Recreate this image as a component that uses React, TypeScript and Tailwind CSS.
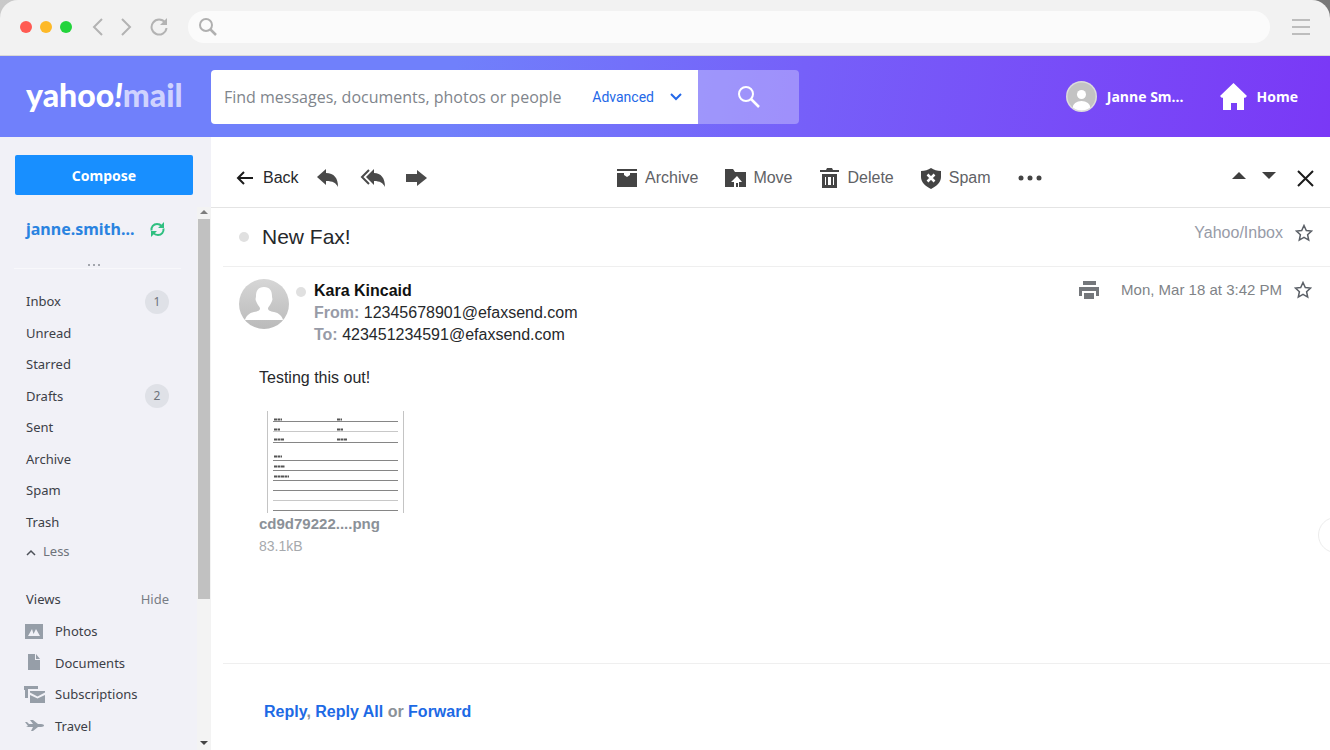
import { useState } from "react";
import type { ReactNode } from "react";
import clsx from "clsx";

const folders = [
  { name: "Inbox", count: 1 },
  { name: "Unread" },
  { name: "Starred" },
  { name: "Drafts", count: 2 },
  { name: "Sent" },
  { name: "Archive" },
  { name: "Spam" },
  { name: "Trash" },
];

const views = [
  {
    name: "Photos",
    icon: (
      <path
        fillRule="evenodd"
        d="M1 3h18v15H1zM4 15h12l-4-7-2.500 5L8 8z"
      />
    ),
  },
  { name: "Documents", icon: <path d="M4 2h7v6h5v10H4zM12 2l4 5h-4z" /> },
  {
    name: "Subscriptions",
    icon: (
      <>
        <path d="M0 2h14v3H4v9H1V6H0z" />
        <path d="M6 7h15v1.500l-7.500 4L6 8.500z" />
        <path d="M6 11l7.500 3.500L21 11v8H6z" />
      </>
    ),
  },
  {
    name: "Travel",
    icon: (
      <path d="M1 7h2l2 2h4L6 5h3l5 4h3c2 0 3 .8 3 1.500S19 12 17 12h-3l-5 4H7l2-4H4l-2-1h2z" />
    ),
  },
];

const actions = [
  {
    name: "Archive",
    icon: <path d="M0 1h20v2H0zM0 5h7v2l3 2 3-2V5h7v14H0z" />,
  },
  {
    name: "Move",
    icon: (
      <path
        fillRule="evenodd"
        d="M0 1h8l2 3h11v15h-7v-5h3l-5-6-6 6h3v5H0zM11 15h2v4h-2z"
      />
    ),
  },
  {
    name: "Delete",
    icon: (
      <path
        fillRule="evenodd"
        d="M0 2h6l1-2h5l1 2h6v2H0zM2 6h15v14H2zM5 9v8h9V9zM6 9h2v8H6zM11 9h2v8h-2z"
      />
    ),
  },
  {
    name: "Spam",
    icon: (
      <>
        <path d="M10 0c3 2 6 3 10 3v6c0 5-4 9-10 12C4 18 0 14 0 9V3c4 0 7-1 10-3z" />
        <path d="M6.500 6.500l7 7M13.500 6.500l-7 7" stroke="#fff" strokeWidth="2.5" />
      </>
    ),
  },
];

const fieldLines = [11, 21, 32, 50, 60, 70, 80, 90, 100];

const fieldLabels = [
  { x: 7, y: 9, w: 8 },
  { x: 70, y: 9, w: 5 },
  { x: 7, y: 19, w: 6 },
  { x: 70, y: 19, w: 6 },
  { x: 7, y: 29, w: 10 },
  { x: 70, y: 29, w: 10 },
  { x: 7, y: 46, w: 8 },
  { x: 7, y: 56, w: 11 },
  { x: 7, y: 66, w: 15 },
];

function IconButton({ label, children }: { label: string; children: ReactNode }) {
  return (
    <button aria-label={label} className="flex items-center justify-center">
      {children}
    </button>
  );
}

function Star() {
  return (
    <svg width="18" height="18" viewBox="0 0 18 18" fill="none" stroke="#5b6067" strokeWidth="1.5">
      <path d="M9 1.500l2.300 5 5.200.6-3.900 3.600 1.100 5.400L9 13.400l-4.700 2.700 1.100-5.400L1.500 7.100l5.200-.6z" />
    </svg>
  );
}

function BrowserBar() {
  return (
    <div className="bg-linear-to-r from-[#c9c9c9] to-[#777777]">
      <div className="flex h-14 items-center rounded-t-[18px] border-b border-[#d9d9d6] bg-[#f2f2f2] px-5 pb-[2px]">
        <div className="flex gap-2">
          <span className="size-3 rounded-full bg-[#ff5a52]" />
          <span className="size-3 rounded-full bg-[#fdb927]" />
          <span className="size-3 rounded-full bg-[#22d43b]" />
        </div>
        <div className="ml-5 flex gap-[18px] text-[#b3b3b3]">
          <IconButton label="Previous page">
            <svg width="11" height="18" fill="none" stroke="currentColor" strokeWidth="2">
              <path d="M10 1L2 9l8 8" />
            </svg>
          </IconButton>
          <IconButton label="Next page">
            <svg width="11" height="18" fill="none" stroke="currentColor" strokeWidth="2">
              <path d="M1 1l8 8-8 8" />
            </svg>
          </IconButton>
          <IconButton label="Reload">
            <svg width="18" height="18" fill="none" stroke="currentColor" strokeWidth="2">
              <path d="M15 4.500A7.500 7.500 0 1 0 16.500 10" />
              <path d="M17 0v7h-7z" fill="currentColor" stroke="none" />
            </svg>
          </IconButton>
        </div>
        <label className="mr-[22px] ml-5 flex h-8 grow items-center gap-3 rounded-2xl bg-[#fbfbfb] px-[10px]">
          <svg width="19" height="19" fill="none" stroke="#b0b0b0" strokeWidth="2">
            <circle cx="8" cy="8" r="6" />
            <path d="M12 12l6 6" strokeWidth="2.5" />
          </svg>
          <input aria-label="Address" className="h-full min-w-0 grow bg-transparent text-sm outline-none" />
        </label>
        <IconButton label="Browser menu">
          <svg width="18" height="18" stroke="#bdbdbd" strokeWidth="2">
            <path d="M0 2h18M0 9h18M0 16h18" />
          </svg>
        </IconButton>
      </div>
    </div>
  );
}

function Header() {
  return (
    <header className="flex h-[81px] shrink-0 items-center bg-[linear-gradient(100deg,#7080fb_0%,#7080fb_34%,#7660f9_60%,#7a38f6_100%)] pr-8 text-white">
      <a
        href="#"
        className="flex w-[211px] shrink-0 items-center pb-1 pl-[26px] font-['Lato',sans-serif] text-[32px] leading-8 font-black"
      >
        yahoo<span className="italic">!</span>
        <span className="text-[#cfd3fe]">mail</span>
      </a>
      <form className="flex h-[54px] w-[588px]" onSubmit={(e) => e.preventDefault()}>
        <div className="flex min-w-0 grow items-center rounded-l-sm bg-white pr-4 pl-[13px]">
          <input
            aria-label="Search mail"
            placeholder="Find messages, documents, photos or people"
            className="min-w-0 grow font-['Open_Sans',sans-serif] text-base text-[#222222] outline-none placeholder:text-[#7f858c]"
          />
          <button
            type="button"
            className="flex items-center gap-4 font-['Roboto',sans-serif] text-sm text-[#2468e8]"
          >
            Advanced
            <svg width="12" height="8" fill="none" stroke="currentColor" strokeWidth="2">
              <path d="M1 1l5 5 5-5" />
            </svg>
          </button>
        </div>
        <button
          aria-label="Search"
          className="flex w-[101px] items-center justify-center rounded-r-sm bg-white/30"
        >
          <svg width="22" height="22" fill="none" stroke="#fff" strokeWidth="2">
            <circle cx="8" cy="8" r="7" />
            <path d="M13 13l8 8" strokeWidth="2.5" />
          </svg>
        </button>
      </form>
      <div className="ml-auto flex items-center gap-9 font-['Open_Sans',sans-serif] text-sm font-bold">
        <a href="#" className="flex items-center gap-[10px]">
          <svg width="31" height="31" viewBox="0 0 31 31">
            <clipPath id="user-clip">
              <circle cx="15.500" cy="15.500" r="14" />
            </clipPath>
            <circle cx="15.500" cy="15.500" r="15.500" fill="#dcdcdc" />
            <g clipPath="url(#user-clip)">
              <path d="M0 0h31v31H0z" fill="#c3c3c3" />
              <circle cx="15.500" cy="13.500" r="4.500" fill="#fff" />
              <ellipse cx="15.500" cy="27" rx="9" ry="7" fill="#fff" />
            </g>
          </svg>
          Janne Sm...
        </a>
        <a href="#" className="flex items-center gap-[10px]">
          <svg width="27" height="28" fill="#fff">
            <path d="M13.500 0L27 13l-2 2-1-.5V27h-7v-7h-6v7H3V14.500L2 15l-2-2z" />
          </svg>
          Home
        </a>
      </div>
    </header>
  );
}

function Sidebar() {
  const [showViews, setShowViews] = useState(true);

  return (
    <aside className="flex w-[211px] shrink-0 flex-col bg-[#f1f1f7] pt-[18px] font-['Noto_Sans',sans-serif] text-[13px] text-[#3c4047]">
      <button className="mr-[18px] ml-[15px] h-10 shrink-0 rounded-xs bg-[#188fff] pt-px text-sm font-bold text-white">
        Compose
      </button>
      <div className="mt-3 flex min-h-0 grow">
        <nav className="min-w-0 grow overflow-hidden pl-[26px]">
          <div className="flex h-[44px] items-center justify-between pr-8">
            <a href="#" className="text-base font-bold text-[#2a83e0]">
              janne.smith...
            </a>
            <IconButton label="Refresh">
              <svg width="15" height="15" viewBox="0 0 15 15" fill="none" stroke="#2fbf80" strokeWidth="2">
                <path d="M1.500 8.500C1 5 3.500 2 7 2c2 0 3.500.7 4.500 2M13.500 6.500C14 10 11.500 13 8 13c-2 0-3.500-.7-4.500-2" />
                <path d="M14 0v6H8zM1 15V9h6z" fill="#2fbf80" stroke="none" />
              </svg>
            </IconButton>
          </div>
          <div className="mt-3 mr-4 -ml-3 flex h-[6px] items-center justify-center border-b border-[#f8f8fb] pr-2">
            <svg width="12" height="3" fill="#a3a6ad">
              <path d="M0 0h2v2H0zM5 0h2v2H5zM10 0h2v2h-2z" />
            </svg>
          </div>
          <ul className="mt-[17px] flex h-[252px] flex-col pr-7">
            {folders.map((folder) => (
              <li key={folder.name} className="flex flex-1 items-center justify-between">
                <a href="#">{folder.name}</a>
                {folder.count && (
                  <span className="flex size-6 items-center justify-center rounded-full bg-[#dfe1e7] text-xs text-[#6e737b]">
                    {folder.count}
                  </span>
                )}
              </li>
            ))}
          </ul>
          <button className="flex h-7 items-center gap-[7px] text-[#6e737b]">
            <svg width="10" height="7" fill="none" stroke="#4d5159" strokeWidth="1.5">
              <path d="M1 6l4-4 4 4" />
            </svg>
            Less
          </button>
          <div className="mt-[18px] flex h-8 items-center justify-between pr-7">
            <h2>Views</h2>
            <button className="text-[#787d85]" onClick={() => setShowViews(!showViews)}>
              Hide
            </button>
          </div>
          <ul className={clsx("-ml-[2px] h-[126px] flex-col", showViews ? "flex" : "hidden")}>
            {views.map((view) => (
              <li key={view.name} className="flex flex-1 items-center">
                <a href="#" className="flex items-center gap-[9px]">
                  <svg width="22" height="22" fill="#969ea8">
                    {view.icon}
                  </svg>
                  {view.name}
                </a>
              </li>
            ))}
          </ul>
        </nav>
        <div className="flex w-[14px] shrink-0 flex-col items-center bg-[#f3f3f3]">
          <svg width="8" height="12" className="shrink-0" fill="#7d7d7d">
            <path d="M0 7l4-4 4 4z" />
          </svg>
          <div className="h-[70%] w-3 bg-[#c1c1c1]" />
          <svg width="8" height="12" className="mt-auto shrink-0" fill="#444">
            <path d="M0 3h8L4 7z" />
          </svg>
        </div>
      </div>
    </aside>
  );
}

function Toolbar() {
  return (
    <div className="flex h-[71px] shrink-0 items-center justify-between border-b border-[#e4e4e4] pt-3 pr-4 pl-[25px] text-base text-[#5f6266]">
      <div className="flex items-center gap-[18px]">
        <button className="flex items-center gap-[10px] text-[#26282b]">
          <svg width="17" height="14" fill="none" stroke="#1b1b1b" strokeWidth="2">
            <path d="M17 7H2M8 1L2 7l6 6" />
          </svg>
          Back
        </button>
        <IconButton label="Reply">
          <svg width="21" height="18" fill="#4a4a4a">
            <path d="M9 0v4c8 0 12 5 12 14-2-4-5-6-12-6v4L0 8z" />
          </svg>
        </IconButton>
        <div className="ml-1 flex items-center gap-5">
          <IconButton label="Reply all">
            <svg width="26" height="18" fill="#4a4a4a">
              <path d="M14 0v4c7 0 11 5 11 14-2-4-5-6-11-6v4L6 8z" />
              <path d="M9 1L2 8l7 7" fill="none" stroke="#4a4a4a" strokeWidth="2" />
            </svg>
          </IconButton>
          <IconButton label="Forward">
            <svg width="21" height="18" fill="#4a4a4a">
              <path d="M0 5h11V1l10 8-10 8v-4H0z" />
            </svg>
          </IconButton>
        </div>
      </div>
      <div className="flex items-center gap-[27px]">
        {actions.map((action) => (
          <button key={action.name} className="flex items-center gap-[7px]">
            <svg width="21" height="21" fill="#444">
              {action.icon}
            </svg>
            {action.name}
          </button>
        ))}
        <IconButton label="More actions">
          <svg width="24" height="6" fill="#444">
            <circle cx="3" cy="3" r="2.500" />
            <circle cx="12" cy="3" r="2.500" />
            <circle cx="21" cy="3" r="2.500" />
          </svg>
        </IconButton>
      </div>
      <div className="flex items-center gap-4">
        <IconButton label="Previous message">
          <svg width="14" height="14" fill="#3f3f3f">
            <path d="M0 8l7-7 7 7z" />
          </svg>
        </IconButton>
        <IconButton label="Next message">
          <svg width="14" height="14" fill="#3f3f3f">
            <path d="M0 1h14L7 8z" />
          </svg>
        </IconButton>
        <div className="ml-[5px] flex">
          <IconButton label="Close">
            <svg width="17" height="17" stroke="#1b1b1b" strokeWidth="2">
              <path d="M1 1l15 15M16 1L1 16" />
            </svg>
          </IconButton>
        </div>
      </div>
    </div>
  );
}

function Message() {
  return (
    <article className="flex grow flex-col pl-3 text-base text-[#26282b]">
      <div className="flex h-[59px] items-center border-b border-[#efefef] pr-[17px] pl-4">
        <span className="size-[10px] rounded-full bg-[#e0e0e0]" />
        <h1 className="ml-[13px] text-[21px]">New Fax!</h1>
        <div className="ml-auto flex items-center gap-3 pb-2 text-[#979ba7]">
          Yahoo/Inbox
          <IconButton label="Star conversation">
            <Star />
          </IconButton>
        </div>
      </div>
      <div className="flex items-start pt-3 pr-[18px] pl-4">
        <svg width="50" height="50" viewBox="0 0 50 50">
          <defs>
            <linearGradient id="sender-bg" x2="0" y2="1">
              <stop stopColor="#d6d6d6" />
              <stop offset="1" stopColor="#bababa" />
            </linearGradient>
          </defs>
          <circle cx="25" cy="25" r="25" fill="url(#sender-bg)" />
          <path
            fill="#fff"
            d="M25 8c6 0 8 4 8 9 0 2 1 3 0 5-1 3-3 5-4 7 0 3 2 3 6 4 5 1 8 4 9 8H6c1-4 4-7 9-8 4-1 6-1 6-4-1-2-3-4-4-7-1-2 0-3 0-5 0-5 2-9 8-9z"
          />
        </svg>
        <span className="mt-2 ml-[7px] size-[10px] rounded-full bg-[#e0e0e0]" />
        <div className="ml-2 pt-px leading-[22px]">
          <p className="font-bold text-[#111111]">Kara Kincaid</p>
          <p>
            <b className="text-[#979ba7]">From:</b> 12345678901@efaxsend.com
          </p>
          <p>
            <b className="text-[#979ba7]">To:</b> 423451234591@efaxsend.com
          </p>
        </div>
        <div className="ml-auto flex items-center text-[15px] leading-[22px] text-[#808387]">
          <IconButton label="Print">
            <svg width="20" height="20" fill="#74777b">
              <path d="M4 1h13v4H4zM0 7h20v9h-3v-5H3v5H0zM5 13h10v6H5z" />
            </svg>
          </IconButton>
          <time className="mr-3 ml-[22px]">Mon, Mar 18 at 3:42 PM</time>
          <IconButton label="Star message">
            <Star />
          </IconButton>
        </div>
      </div>
      <div className="mt-5 pl-9">
        <p>Testing this out!</p>
        <a href="#" className="mt-[21px] flex flex-col items-start">
          <svg width="146" height="102" fill="none">
            <path d="M8.500 0v102M144.500 0v102" stroke="#c4c4c4" />
            <g transform="translate(8 0)">
              {fieldLines.map((y) => (
                <path
                  key={y}
                  d={`M6 ${y - 0.5}h125`}
                  stroke={y === 21 || y === 90 ? "#c8c8c8" : "#868686"}
                />
              ))}
              {fieldLabels.map((label, i) => (
                <path
                  key={i}
                  d={`M${label.x} ${label.y - 0.5}h${label.w}`}
                  stroke="#555"
                  strokeWidth="2"
                  strokeDasharray="3 0.5"
                />
              ))}
            </g>
          </svg>
          <span className="text-[15px] leading-[22px] font-bold text-[#8b9198]">cd9d79222....png</span>
          <span className="text-sm leading-[22px] text-[#a6a9ad]">83.1kB</span>
        </a>
      </div>
      <footer className="mt-auto flex h-[87px] items-center border-t border-[#efefef] pb-2 pl-[41px]">
        <p className="pt-[18px] font-bold whitespace-pre text-[#8b9198]">
          <a href="#" className="text-[#1d6ae5]">
            Reply
          </a>
          ,{" "}
          <a href="#" className="text-[#1d6ae5]">
            Reply All
          </a>{" "}
          or{" "}
          <a href="#" className="text-[#1d6ae5]">
            Forward
          </a>
        </p>
      </footer>
    </article>
  );
}

export default function App() {
  return (
    <div className="flex h-screen flex-col overflow-hidden bg-white font-['Liberation_Sans',Arial,sans-serif]">
      <BrowserBar />
      <Header />
      <div className="flex min-h-0 grow">
        <Sidebar />
        <main className="relative flex min-w-0 grow flex-col">
          <Toolbar />
          <Message />
          <button
            aria-label="Open panel"
            className="absolute top-[62%] -right-6 size-9 rounded-full border border-[#ececec] bg-white"
          />
        </main>
      </div>
    </div>
  );
}
